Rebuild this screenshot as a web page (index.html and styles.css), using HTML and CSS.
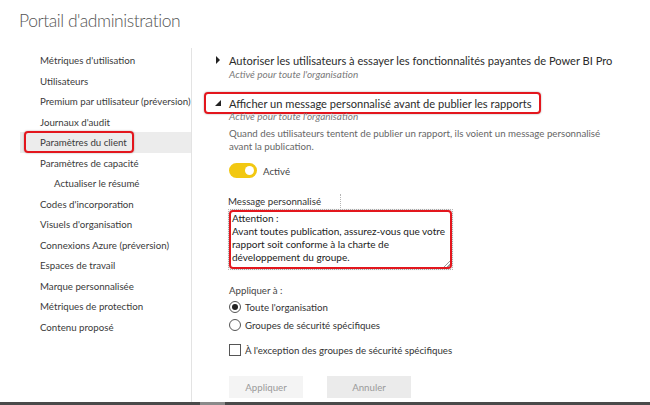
FILE: index.html
```html
<!DOCTYPE html>
<html lang="fr">
<head>
    <meta charset="UTF-8">
    <title>Portail d'administration</title>
    <link rel="stylesheet" href="styles.css">
</head>
<body>
<div class="page">
    <h1 class="title">Portail d'administration</h1>

    <div class="layout">
        <!-- Navigation latérale -->
        <nav class="sidebar">
            <a class="nav-item">Métriques d'utilisation</a>
            <a class="nav-item">Utilisateurs</a>
            <a class="nav-item">Premium par utilisateur (préversion)</a>
            <a class="nav-item">Journaux d'audit</a>
            <a class="nav-item active"><span class="mark nav-mark">Paramètres du client</span></a>
            <a class="nav-item">Paramètres de capacité</a>
            <a class="nav-item sub">Actualiser le résumé</a>
            <a class="nav-item">Codes d'incorporation</a>
            <a class="nav-item">Visuels d'organisation</a>
            <a class="nav-item">Connexions Azure (préversion)</a>
            <a class="nav-item">Espaces de travail</a>
            <a class="nav-item">Marque personnalisée</a>
            <a class="nav-item">Métriques de protection</a>
            <a class="nav-item">Contenu proposé</a>
        </nav>

        <main class="content">
            <section class="setting">
                <div class="setting-head">
                    <span class="caret caret-right"></span>
                    <span class="setting-title">Autoriser les utilisateurs à essayer les fonctionnalités payantes de Power BI Pro</span>
                </div>
                <div class="setting-state">Activé pour toute l'organisation</div>
            </section>

            <section class="setting open">
                <div class="setting-head mark head-mark">
                    <span class="caret caret-down"></span>
                    <span class="setting-title">Afficher un message personnalisé avant de publier les rapports</span>
                </div>
                <div class="setting-state">Activé pour toute l'organisation</div>

                <p class="setting-desc">Quand des utilisateurs tentent de publier un rapport, ils voient un message personnalisé avant la publication.</p>

                <div class="toggle-row">
                    <span class="toggle"><span class="knob"></span></span>
                    <span class="toggle-label">Activé</span>
                </div>

                <div class="field">
                    <div class="field-label">Message personnalisé</div>
                    <div class="textarea">
                        <div class="textarea-inner mark">Attention :<br>Avant toutes publication, assurez-vous que votre rapport soit conforme à la charte de développement du groupe.</div>
                        <span class="grip"></span>
                    </div>
                </div>

                <div class="apply">
                    <div class="apply-label">Appliquer à :</div>
                    <label class="choice"><span class="radio checked"></span>Toute l'organisation</label>
                    <label class="choice"><span class="radio"></span>Groupes de sécurité spécifiques</label>
                    <label class="choice except"><span class="checkbox"></span>À l'exception des groupes de sécurité spécifiques</label>
                </div>

                <div class="actions">
                    <button class="btn">Appliquer</button>
                    <button class="btn btn-cancel">Annuler</button>
                </div>
            </section>
        </main>
    </div>

    <div class="taskbar"><span class="thumb"></span></div>
</div>
</body>
</html>
```

FILE: styles.css
```css
* {
  margin: 0;
  padding: 0;
  box-sizing: border-box;
}

:root {
  --text: #333333;
  --muted: #666666;
  --line: #e3e3e3;
  --mark: #e3161d;
  --yellow: #f2c811;
}

body {
  font-family: Lato, "Open Sans", sans-serif;
  color: var(--text);
  background: #fff;
  width: 650px;
  height: 405px;
  overflow: hidden;
}

.page {
  display: flex;
  flex-direction: column;
  height: 405px;
}

.title {
  font-size: 17.5px;
  font-weight: 300;
  color: #555;
  height: 48px;
  padding: 10px 0 0 19px;
  letter-spacing: -0.45px;
}

.layout {
  display: flex;
  flex: 1;
  min-height: 0;
}

/* Navigation */
.sidebar {
  width: 172px;
  margin-left: 20px;
  border-right: 1px solid var(--line);
  display: flex;
  flex-direction: column;
  padding-top: 2px;
}

.nav-item {
  display: flex;
  align-items: center;
  height: 20.5px;
  padding-left: 20px;
  font-size: 9.7px;
  color: #3a3a3a;
  white-space: nowrap;
}

.nav-item.sub {
  padding-left: 34px;
}

.nav-item.active {
  background: #ececec;
  padding-left: 4px;
}

.mark {
  border: 2px solid var(--mark);
  border-radius: 4px;
  box-shadow: 0 0 2px rgba(0, 0, 0, 0.35);
}

.nav-mark {
  display: flex;
  align-items: center;
  height: 22px;
  width: 110px;
  padding-left: 14px;
}

/* Contenu */
.content {
  flex: 1;
  padding: 3px 0 0 24px;
}

.setting-head {
  display: flex;
  align-items: center;
  height: 18px;
}

.caret {
  width: 13px;
  display: inline-block;
  position: relative;
  height: 8px;
}

.caret-right::before {
  content: "";
  position: absolute;
  left: 0;
  top: 0;
  border-left: 4px solid #222;
  border-top: 4px solid transparent;
  border-bottom: 4px solid transparent;
}

.caret-down::before {
  content: "";
  position: absolute;
  left: -1px;
  top: 1px;
  border-right: 6px solid #222;
  border-top: 6px solid transparent;
}

.setting-title {
  font-size: 11.1px;
  color: #2b2b2b;
  white-space: nowrap;
}

.setting-state {
  font-size: 10px;
  font-style: italic;
  color: #7a7a7a;
  padding-left: 13px;
  height: 10px;
  line-height: 10px;
}

.setting.open {
  margin-top: 13px;
}

.head-mark {
  margin-left: -12px;
  width: 337px;
  height: 22px;
  padding-left: 10px;
}

.setting.open .setting-state {
  margin-top: -3px;
}

.setting-desc {
  font-size: 9.7px;
  line-height: 13px;
  color: var(--muted);
  padding-left: 13px;
  margin-top: 6px;
  width: 393px;
}

.toggle-row {
  display: flex;
  align-items: center;
  padding-left: 13px;
  margin-top: 10px;
  height: 15px;
}

.toggle {
  width: 28px;
  height: 15px;
  border-radius: 8px;
  background: var(--yellow);
  display: flex;
  align-items: center;
  justify-content: flex-end;
  padding-right: 3px;
}

.knob {
  width: 9px;
  height: 9px;
  border-radius: 50%;
  background: #fff;
}

.toggle-label {
  font-size: 9.7px;
  margin-left: 6px;
  color: #444;
}

.field {
  padding-left: 12px;
  margin-top: 16px;
}

.field-label {
  font-size: 9.7px;
  line-height: 14px;
  color: #333;
  width: 113px;
  height: 14px;
  border-right: 1px dotted #b5b5b5;
}

.textarea {
  width: 225px;
  height: 61px;
  border: 1px dotted #b8b8b8;
  margin-top: 1px;
  position: relative;
}

.textarea-inner {
  height: 100%;
  font-size: 10px;
  line-height: 13px;
  color: #222;
  padding: 0 0 0 1px;
}

.grip {
  position: absolute;
  right: 2px;
  bottom: 2px;
  width: 6px;
  height: 6px;
  background: linear-gradient(135deg, transparent 45%, #999 45%, #999 55%, transparent 55%, transparent 75%, #999 75%, #999 85%, transparent 85%);
}

.apply {
  padding-left: 13px;
  margin-top: 13px;
}

.apply-label {
  font-size: 9.7px;
  line-height: 14px;
  color: #444;
  height: 14px;
  margin-bottom: 1px;
}

.choice {
  display: flex;
  align-items: center;
  font-size: 9.7px;
  color: #333;
  height: 18px;
}

.radio {
  width: 12px;
  height: 12px;
  border: 1px solid #555;
  border-radius: 50%;
  margin-right: 4px;
  display: flex;
  align-items: center;
  justify-content: center;
}

.radio.checked::before {
  content: "";
  width: 6px;
  height: 6px;
  border-radius: 50%;
  background: #222;
}

.choice.except {
  margin-top: 7px;
}

.checkbox {
  width: 12px;
  height: 12px;
  border: 1px solid #555;
  margin-right: 4px;
}

.actions {
  display: flex;
  gap: 24px;
  padding-left: 13px;
  margin-top: 17px;
}

.btn {
  font-family: inherit;
  font-size: 9.7px;
  color: #9a9a9a;
  background: #f4f4f4;
  border: none;
  width: 74px;
  height: 22px;
}

.btn-cancel {
  background: #ebebeb;
  width: 84px;
}

.taskbar {
  height: 3px;
  background: #4a4a4a;
  position: relative;
}

.thumb {
  position: absolute;
  left: 200px;
  width: 25px;
  height: 3px;
  background: #8a8a8a;
}
```
